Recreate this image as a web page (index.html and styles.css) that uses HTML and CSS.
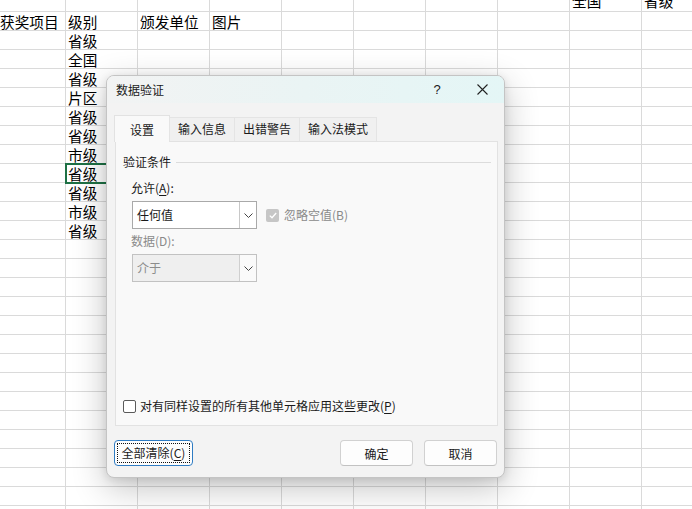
FILE: index.html
```html
<!DOCTYPE html>
<html lang="zh-CN">
<head>
<meta charset="utf-8">
<title>数据验证</title>
<link rel="stylesheet" href="styles.css">
</head>
<body>
<div class="sheet">
  <div class="cell top c9">全国</div>
  <div class="cell top c10">省级</div>
  <div class="cell hdr c1 first">获奖项目</div>
  <div class="cell hdr c2">级别</div>
  <div class="cell hdr c3">颁发单位</div>
  <div class="cell hdr c4">图片</div>
  <div class="col-b">
    <div class="cell">省级</div>
    <div class="cell">全国</div>
    <div class="cell">省级</div>
    <div class="cell">片区</div>
    <div class="cell">省级</div>
    <div class="cell">省级</div>
    <div class="cell">市级</div>
    <div class="cell active">省级</div>
    <div class="cell">省级</div>
    <div class="cell">市级</div>
    <div class="cell">省级</div>
  </div>
</div>

<div class="dialog">
  <div class="titlebar">
    <span class="title">数据验证</span>
    <span class="help">?</span>
    <svg class="close" width="11" height="11" viewBox="0 0 11 11"><path d="M0.5 0.5L10.5 10.5M10.5 0.5L0.5 10.5" stroke="#222" stroke-width="1.1" fill="none"/></svg>
  </div>
  <div class="dbody">
    <div class="tabs">
      <div class="tab selected">设置</div>
      <div class="tab">输入信息</div>
      <div class="tab">出错警告</div>
      <div class="tab">输入法模式</div>
    </div>
    <div class="panel">
      <div class="legend"><span>验证条件</span><span class="rule"></span></div>
      <div class="label">允许(<u>A</u>):</div>
      <div class="row">
        <div class="select">
          <span class="value">任何值</span>
          <span class="arrow"><svg width="9" height="5" viewBox="0 0 9 5"><polyline points="0.5,0.5 4.5,4.5 8.5,0.5" stroke="#444" stroke-width="1" fill="none"/></svg></span>
        </div>
        <div class="check disabled">
          <span class="box"><svg width="8" height="7" viewBox="0 0 8 7"><polyline points="0.8,3.6 3,5.8 7.2,1" stroke="#fff" stroke-width="1.3" fill="none"/></svg></span>
          <span>忽略空值(B)</span>
        </div>
      </div>
      <div class="label dim">数据(D):</div>
      <div class="select off">
        <span class="value">介于</span>
        <span class="arrow"><svg width="9" height="5" viewBox="0 0 9 5"><polyline points="0.5,0.5 4.5,4.5 8.5,0.5" stroke="#444" stroke-width="1" fill="none"/></svg></span>
      </div>
      <div class="apply">
        <span class="box empty"></span>
        <span>对有同样设置的所有其他单元格应用这些更改(<u>P</u>)</span>
      </div>
    </div>
    <div class="footer">
      <button class="btn focus"><span class="dots">全部清除(<u>C</u>)</span></button>
      <span class="spacer"></span>
      <button class="btn">确定</button>
      <button class="btn">取消</button>
    </div>
  </div>
</div>
</body>
</html>
```

FILE: styles.css
```css
html, body {
  margin: 0;
  padding: 0;
  width: 692px;
  height: 509px;
  overflow: hidden;
  background: #ffffff;
  font-family: "Noto Sans CJK SC", "Noto Sans", sans-serif;
}

.sheet {
  margin: -7px 0 0 -6px;
  width: 720px;
  height: 532px;
  display: grid;
  grid-template-columns: repeat(10, 72px);
  grid-template-rows: repeat(28, 19px);
  background:
    repeating-linear-gradient(to right, transparent 0 71px, #dadada 71px 72px),
    repeating-linear-gradient(to bottom, transparent 0 18px, #dadada 18px 19px);
}

.cell {
  font-size: 14.67px;
  line-height: 19px;
  height: 19px;
  padding-left: 2px;
  color: #000;
  white-space: nowrap;
}

.top { grid-row: 1; line-height: 15px; }
.hdr { grid-row: 2; }
.c1 { grid-column: 1; }
.c2 { grid-column: 2; }
.c3 { grid-column: 3; }
.c4 { grid-column: 4; }
.c9 { grid-column: 9; }
.c10 { grid-column: 10; }
.first { padding-left: 6px; }

.col-b {
  grid-column: 2;
  grid-row: 3 / span 11;
  display: flex;
  flex-direction: column;
}

.active {
  outline: 2px solid #1e7145;
  outline-offset: -1px;
}

/* dialog */
.dialog {
  position: absolute;
  left: 106px;
  top: 75px;
  width: 399px;
  height: 403px;
  box-sizing: border-box;
  border: 1px solid #c4c4c4;
  border-radius: 8px;
  background: #f3f3f3;
  box-shadow: 0 10px 34px rgba(0, 0, 0, 0.24), 0 2px 8px rgba(0, 0, 0, 0.10);
  display: flex;
  flex-direction: column;
  overflow: hidden;
  font-size: 12px;
  color: #1a1a1a;
}

.titlebar {
  height: 27px;
  display: flex;
  align-items: center;
  padding: 0 0 0 9px;
  background: linear-gradient(to right, #f2f3f3 0%, #eaf4f4 50%, #e4f6f6 100%);
}

.title {
  flex: 1;
  line-height: 16px;
}

.help {
  font-family: "Liberation Sans", sans-serif;
  font-size: 13px;
  width: 14px;
  text-align: center;
  margin-right: 33px;
}

.close {
  margin-right: 16px;
}

.dbody {
  flex: 1;
  display: flex;
  flex-direction: column;
  padding: 12px 7px 0 7px;
}

.tabs {
  display: flex;
  align-items: flex-end;
  height: 26px;
  position: relative;
  z-index: 1;
}

.tab {
  box-sizing: border-box;
  height: 24px;
  line-height: 22px;
  padding: 0 8px;
  background: #f0f0f0;
  border: 1px solid #e4e4e4;
  border-bottom: none;
  margin-right: -1px;
}

.tab.selected {
  height: 27px;
  margin-bottom: -1px;
  line-height: 27px;
  padding: 0 15px 0 15px;
  background: #f9f9f9;
  border-color: #e2e2e2;
}

.panel {
  box-sizing: border-box;
  height: 285px;
  margin-left: 1px;
  width: 383px;
  background: #f9f9f9;
  border: 1px solid #e2e2e2;
  display: flex;
  flex-direction: column;
  padding: 12px 6px 11px 7px;
}

.legend {
  display: flex;
  align-items: center;
  line-height: 16px;
}

.rule {
  flex: 1;
  height: 1px;
  background: #dcdcdc;
  margin-left: 5px;
}

.label {
  margin: 10px 0 0 8px;
  line-height: 16px;
}

.label u, .apply u, .btn u { text-underline-offset: 2px; }

.dim { color: #8a8a8a; margin-top: 4px; }

.row {
  display: flex;
  align-items: center;
  margin-top: 5px;
}

.select {
  box-sizing: border-box;
  width: 125px;
  height: 28px;
  margin-left: 9px;
  display: flex;
  background: #ffffff;
  border: 1px solid #a9a9a9;
}

.row .select { margin-left: 9px; }
.select.off {
  margin-top: 5px;
  background: #efefef;
  border-color: #c2c2c2;
  color: #8c8c8c;
}

.value {
  flex: 1;
  line-height: 26px;
  padding-left: 4px;
  font-size: 12px;
}

.arrow {
  width: 16px;
  border-left: 1px solid #c8c8c8;
  background: #ffffff;
  display: flex;
  align-items: center;
  justify-content: center;
}

.select.off .arrow { background: #fafafa; border-left-color: #cfcfcf; }

.check {
  display: flex;
  align-items: center;
  margin-left: 9px;
  line-height: 16px;
}

.check.disabled { color: #8a8a8a; }

.box {
  box-sizing: border-box;
  width: 13px;
  height: 13px;
  border-radius: 2px;
  margin-right: 5px;
  display: flex;
  align-items: center;
  justify-content: center;
  background: #c6c6c6;
}

.box.empty {
  background: #ffffff;
  border: 1px solid #5a5a5a;
  margin-right: 4px;
}

.apply {
  margin-top: auto;
  display: flex;
  align-items: center;
  line-height: 16px;
}

.footer {
  display: flex;
  margin-top: 14px;
  height: 26px;
}

.spacer { flex: 1; }

.btn {
  box-sizing: border-box;
  width: 73px;
  height: 26px;
  margin-left: 11px;
  padding: 0;
  font-family: inherit;
  font-size: 12px;
  color: #1a1a1a;
  background: #fdfdfd;
  border: 1px solid #d1d1d1;
  border-bottom-color: #c2c2c2;
  border-radius: 4px;
}

.btn.focus {
  width: 79px;
  margin-left: 0;
  border: 1px solid #2f7cc3;
  padding: 2px;
  display: flex;
}

.dots {
  flex: 1;
  border: 1px dotted #111;
  display: flex;
  align-items: center;
  justify-content: center;
  line-height: 16px;
}
```
